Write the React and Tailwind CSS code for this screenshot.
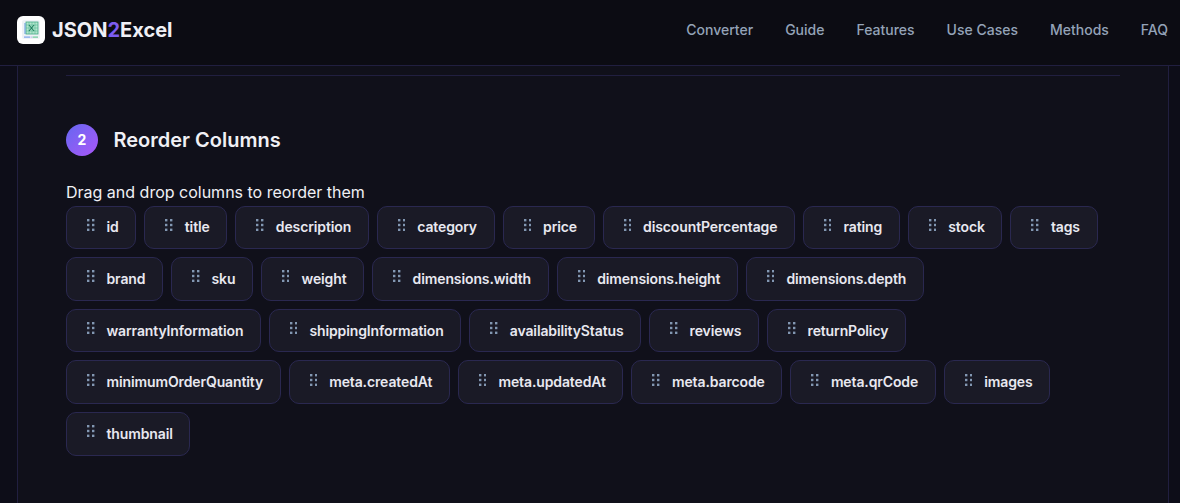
const navLinks = ['Converter', 'Guide', 'Features', 'Use Cases', 'Methods', 'FAQ']

const columnRows = [
  ['id', 'title', 'description', 'category', 'price', 'discountPercentage', 'rating', 'stock', 'tags'],
  ['brand', 'sku', 'weight', 'dimensions.width', 'dimensions.height', 'dimensions.depth'],
  ['warrantyInformation', 'shippingInformation', 'availabilityStatus', 'reviews', 'returnPolicy'],
  ['minimumOrderQuantity', 'meta.createdAt', 'meta.updatedAt', 'meta.barcode', 'meta.qrCode', 'images'],
  ['thumbnail'],
]

function Logo() {
  return (
    <div className="flex h-7 w-7 items-center justify-center rounded-md bg-white">
      <svg width="22" height="22" viewBox="0 0 22 22">
        <rect x="2" y="1" width="18" height="19" rx="2" fill="#eef2f6" />
        <rect x="6" y="3" width="12" height="12" fill="#b4e6cd" stroke="#3fa884" strokeWidth="0.8" />
        <path d="M6 6h12M6 9h12M6 12h12M9 3v12M12 3v12M15 3v12" stroke="#57b897" strokeWidth="0.6" />
        <path d="M9 6l5 6M14 6l-5 6" stroke="#1f7f5f" strokeWidth="1.1" />
        <path d="M5 4v11" stroke="#5f9bdc" strokeWidth="1" />
        <rect x="4" y="17.5" width="6" height="1.2" fill="#7ba4ec" />
        <rect x="10.5" y="17.5" width="1.5" height="1.2" fill="#c4b4f0" />
        <rect x="12.5" y="17.5" width="5.5" height="1.2" fill="#6cc99a" />
      </svg>
    </div>
  )
}

function Grip() {
  return (
    <svg width="7.5" height="12" viewBox="0 0 7.5 12" fill="#8297b2" className="mr-[12px] mb-[5px] shrink-0">
      <rect x="0" y="0" width="2.4" height="2.4" />
      <rect x="5" y="0" width="2.4" height="2.4" />
      <rect x="0" y="4.8" width="2.4" height="2.4" />
      <rect x="5" y="4.8" width="2.4" height="2.4" />
      <rect x="0" y="9.6" width="2.4" height="2.4" />
      <rect x="5" y="9.6" width="2.4" height="2.4" />
    </svg>
  )
}

function ColumnChip({ name }) {
  return (
    <div className="flex h-[43.6px] items-center rounded-[10px] border border-[#2a2850] bg-[#1a1a26] pl-[20px] pr-[16.6px] text-sm font-semibold tracking-[-0.12px] text-[#e8e8f0]">
      <Grip />
      <span>{name}</span>
    </div>
  )
}

export default function App() {
  return (
    <div className="flex h-[503px] flex-col overflow-hidden bg-[#0d0d18] font-['Inter',sans-serif]">
      <header className="flex h-[66px] shrink-0 items-center justify-between border-b border-[#211f40] bg-[#0c0c13] pb-[6px] pl-[17px] pr-[12px]">
        <div className="flex items-center gap-[7px]">
          <Logo />
          <span className="text-xl font-bold text-[#f0f0f5]">
            JSON<span className="text-[#7c5cf0]">2</span>Excel
          </span>
        </div>
        <nav className="mt-px flex gap-8">
          {navLinks.map(link => (
            <a key={link} className="text-sm font-medium text-[#94a3b8]">{link}</a>
          ))}
        </nav>
      </header>

      <div className="ml-[17px] mr-[11px] flex-1 border-x border-[#211f40] bg-[#10101a] px-12">
        <div className="mt-[9px] border-t border-[#211f40]" />

        <div className="mt-12 flex items-center gap-[15.5px]">
          <div className="flex h-8 w-8 items-center justify-center rounded-full bg-gradient-to-br from-[#6366f1] to-[#a855f7] text-sm font-bold text-white">
            2
          </div>
          <h2 className="text-xl font-semibold text-[#f0f0f5]">Reorder Columns</h2>
        </div>

        <p className="mt-[23px] text-base leading-[26.4px] text-[#f0f0f5]">Drag and drop columns to reorder them</p>

        <div className="flex flex-col gap-2 pt-[0.15px]">
          {columnRows.map((row, i) => (
            <div key={i} className="flex gap-2">
              {row.map(name => <ColumnChip key={name} name={name} />)}
            </div>
          ))}
        </div>
      </div>
    </div>
  )
}
